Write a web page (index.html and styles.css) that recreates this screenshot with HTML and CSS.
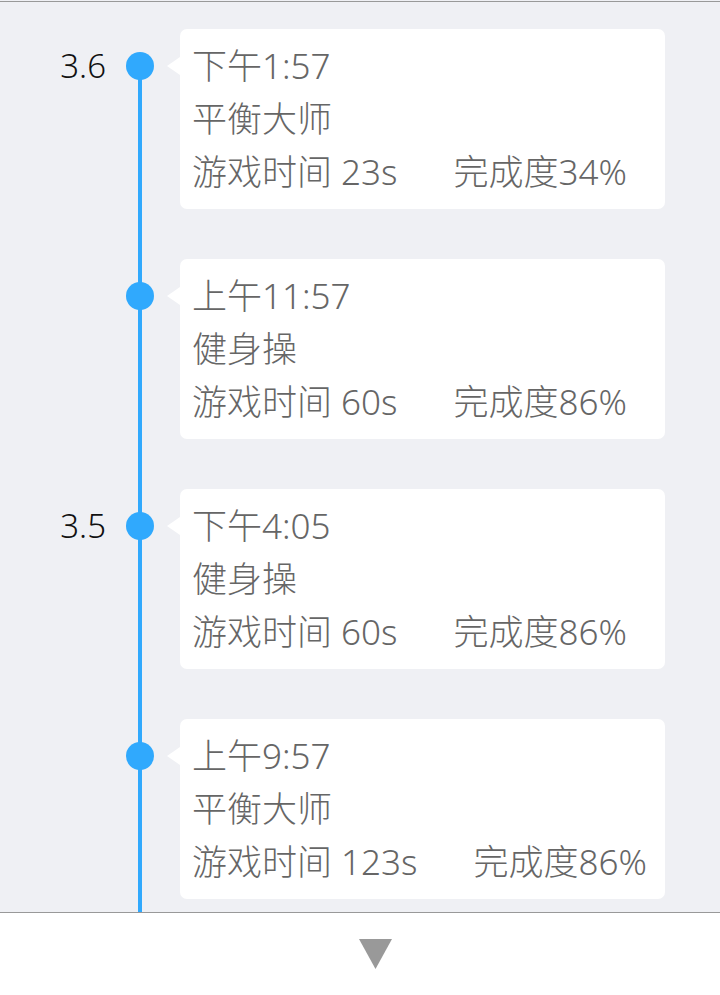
FILE: index.html
```html
<!DOCTYPE html>
<html lang="zh">
<head>
<meta charset="utf-8">
<title>记录</title>
<link rel="stylesheet" href="styles.css">
</head>
<body>
<div class="page">
  <div class="list">
    <div class="row first">
      <div class="date">3.6</div>
      <div class="axis"><span class="dot"></span></div>
      <div class="card">
        <div class="line">下午1:57</div>
        <div class="line">平衡大师</div>
        <div class="line">游戏时间 23s<span class="rate">完成度34%</span></div>
      </div>
    </div>
    <div class="row">
      <div class="date"></div>
      <div class="axis"><span class="dot"></span></div>
      <div class="card">
        <div class="line">上午11:57</div>
        <div class="line">健身操</div>
        <div class="line">游戏时间 60s<span class="rate">完成度86%</span></div>
      </div>
    </div>
    <div class="row">
      <div class="date">3.5</div>
      <div class="axis"><span class="dot"></span></div>
      <div class="card">
        <div class="line">下午4:05</div>
        <div class="line">健身操</div>
        <div class="line">游戏时间 60s<span class="rate">完成度86%</span></div>
      </div>
    </div>
    <div class="row">
      <div class="date"></div>
      <div class="axis"><span class="dot"></span></div>
      <div class="card">
        <div class="line">上午9:57</div>
        <div class="line">平衡大师</div>
        <div class="line">游戏时间 123s<span class="rate">完成度86%</span></div>
      </div>
    </div>
  </div>
  <div class="footer">
    <svg class="arrow" width="33" height="30" viewBox="0 0 33 30"><polygon points="0,0 33,0 16.5,30" fill="#999999"/></svg>
  </div>
</div>
</body>
</html>
```

FILE: styles.css
```css
html, body {
  margin: 0;
  padding: 0;
}
body {
  font-family: "Noto Sans", "Noto Sans CJK SC", sans-serif;
  background: #eff0f4;
}
.page {
  width: 720px;
  height: 995px;
  display: flex;
  flex-direction: column;
  padding-top: 1px;
  box-sizing: border-box;
  background: #eff0f4;
}
.list {
  height: 912px;
  flex: none;
  overflow: hidden;
  border-top: 1px solid #999999;
  border-bottom: 1px solid #999999;
  box-sizing: border-box;
  background: #eff0f4;
  padding-top: 27px;
}
.row {
  display: flex;
  align-items: stretch;
}
.date {
  width: 106px;
  flex: none;
  text-align: right;
  font-size: 33px;
  font-weight: 300;
  color: #111111;
  line-height: 74px;
  height: 74px;
}
.axis {
  width: 28px;
  flex: none;
  margin-left: 20px;
  background: linear-gradient(#30a9fd, #30a9fd) no-repeat center top / 4px 100%;
}
.row.first .axis {
  background-position: center 37px;
}
.dot {
  display: block;
  width: 28px;
  height: 28px;
  margin-top: 23px;
  border-radius: 50%;
  background: #30a9fd;
}
.card {
  position: relative;
  margin-left: 26px;
  margin-bottom: 50px;
  width: 485px;
  height: 180px;
  flex: none;
  box-sizing: border-box;
  background: #ffffff;
  border-radius: 7px;
  padding: 10px 12px 0;
  color: #666666;
  font-size: 35px;
  font-weight: 300;
}
.card::before {
  content: "";
  position: absolute;
  left: -13px;
  top: 28px;
  border-right: 13px solid #ffffff;
  border-top: 9px solid transparent;
  border-bottom: 9px solid transparent;
}
.line {
  line-height: 53px;
  height: 53px;
  white-space: nowrap;
}
.rate {
  margin-left: 56px;
}
.footer {
  flex: 1;
  background: #ffffff;
  display: flex;
  justify-content: center;
  align-items: flex-start;
}
.arrow {
  margin-top: 26px;
  margin-left: 31px;
  display: block;
}
```
